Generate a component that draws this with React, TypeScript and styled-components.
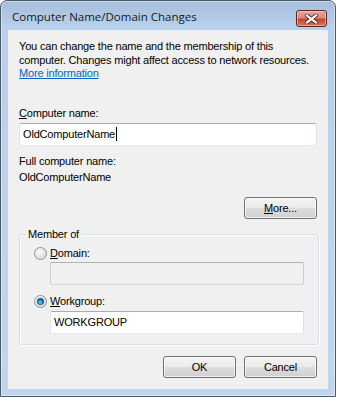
import React from 'react'
import styled, { createGlobalStyle } from 'styled-components'

const GlobalStyle = createGlobalStyle`
  html, body {
    margin: 0;
    padding: 0;
    background: #ffffff;
  }
  body {
    font-family: "Liberation Sans", Arial, sans-serif;
    font-size: 11px;
    letter-spacing: -0.18px;
    color: #000;
  }
`;

const Window = styled.div`
  width: 336px;
  height: 397px;
  box-sizing: border-box;
  border: 1px solid #4b5a6a;
  border-radius: 7px 7px 0 0;
  background: linear-gradient(#a5bedb 0px, #b9d0ea 26px, #bfd6ef 100%);
  padding: 0 7px 7px;
  display: flex;
  flex-direction: column;
  box-shadow: inset 0 0 0 1px rgba(255, 255, 255, 0.45);
`;

const TitleBar = styled.div`
  height: 29px;
  display: flex;
  align-items: flex-start;
  justify-content: space-between;
`;

const Title = styled.div`
  font-family: "Open Sans", "Noto Sans", sans-serif;
  font-size: 11.5px;
  letter-spacing: 0;
  line-height: 16px;
  padding: 8px 0 0 4px;
  color: #111a24;
`;

const CloseButton = styled.div`
  width: 31px;
  height: 17px;
  box-sizing: border-box;
  margin: 9px 1px 0 0;
  border: 1px solid #5e2323;
  border-radius: 3px;
  background: linear-gradient(#e6a697 0%, #d98a78 45%, #c5482f 55%, #d2715a 100%);
  box-shadow: inset 0 0 0 1px rgba(255, 220, 210, 0.55);
  display: flex;
  align-items: center;
  justify-content: center;
`;

const Client = styled.div`
  flex: 1;
  background: #f0f0f0;
  padding: 10px 11px 0;
  display: flex;
  flex-direction: column;
`;

const Text = styled.div<{ $top?: number }>`
  line-height: 13.5px;
  white-space: nowrap;
  margin-top: ${p => p.$top ?? 0}px;
`;

const Link = styled.a`
  color: #0066cc;
  text-decoration: underline;
  cursor: pointer;
`;

const TextBox = styled.div<{ $disabled?: boolean; $width?: number }>`
  box-sizing: border-box;
  height: 23px;
  width: ${p => (p.$width ? `${p.$width}px` : 'auto')};
  border: 1px solid;
  border-color: ${p => (p.$disabled ? '#adb2b5 #c9cdd1 #d3d6da #c9cdd1' : '#abadb3 #dbdfe6 #e3e9ef #e2e3ea')};
  border-radius: 2px;
  background: ${p => (p.$disabled ? '#f0f0f0' : '#ffffff')};
  padding: 0 3px;
  display: flex;
  align-items: center;
  line-height: 13px;
`;

const Caret = styled.span`
  display: inline-block;
  width: 1px;
  height: 14px;
  background: #000;
  margin-left: 1px;
`;

const ButtonRow = styled.div<{ $top: number }>`
  display: flex;
  justify-content: flex-end;
  gap: 8px;
  margin-top: ${p => p.$top}px;
`;

const Button = styled.button`
  width: 73px;
  height: 22px;
  box-sizing: border-box;
  border: 1px solid #707070;
  border-radius: 3px;
  background: linear-gradient(#f2f2f2 0%, #ebebeb 48%, #dddddd 52%, #cfcfcf 100%);
  box-shadow: inset 0 0 0 1px rgba(255, 255, 255, 0.7);
  font-family: "Liberation Sans", Arial, sans-serif;
  font-size: 11px;
  letter-spacing: -0.18px;
  color: #000;
  padding: 0;
`;

const Group = styled.fieldset`
  margin: 9px 0 0;
  padding: 0;
  border: 1px solid #d5dfe5;
  border-radius: 3px;
  box-shadow: inset 1px 1px 0 #ffffff, 1px 1px 0 #ffffff;
`;

const Legend = styled.legend`
  margin-left: 6px;
  padding: 0 2px;
  line-height: 13.5px;
`;

const GroupBody = styled.div`
  padding: 5.5px 14px 10px 14px;
`;

const RadioRow = styled.label<{ $top?: number }>`
  display: flex;
  align-items: center;
  gap: 3px;
  height: 13.5px;
  line-height: 13.5px;
  margin-top: ${p => p.$top ?? 0}px;
`;

const IndentedBox = styled.div<{ $top: number }>`
  margin: ${p => p.$top}px 0 0 16px;
`;

function Radio({ checked }: { checked?: boolean }) {
  return (
    <svg width="13" height="13" viewBox="0 0 13 13">
      <defs>
        <radialGradient id={checked ? 'rgOn' : 'rgOff'} cx="0.35" cy="0.3" r="0.8">
          <stop offset="0" stopColor="#ffffff" />
          <stop offset="1" stopColor="#cfd3d6" />
        </radialGradient>
        <radialGradient id="dot" cx="0.45" cy="0.65" r="0.7">
          <stop offset="0" stopColor="#7fd8ff" />
          <stop offset="0.55" stopColor="#1a78b8" />
          <stop offset="1" stopColor="#0a3a66" />
        </radialGradient>
      </defs>
      <circle cx="6.5" cy="6.5" r="6" fill={`url(#${checked ? 'rgOn' : 'rgOff'})`} stroke="#8e9093" />
      <circle cx="6.5" cy="6.5" r="4.6" fill="none" stroke="#e4e6e8" strokeWidth="1" />
      {checked && <circle cx="6.5" cy="6.5" r="3.3" fill="url(#dot)" stroke="#174d78" strokeWidth="0.6" />}
    </svg>
  )
}

function CloseGlyph() {
  return (
    <svg width="13" height="10" viewBox="0 0 13 10">
      <path d="M2 1.5 L11 8.5 M11 1.5 L2 8.5" stroke="#5a2a24" strokeWidth="4" strokeLinecap="square" />
      <path d="M2 1.5 L11 8.5 M11 1.5 L2 8.5" stroke="#ffffff" strokeWidth="2.2" strokeLinecap="square" />
    </svg>
  )
}

export default function App() {
  return (
    <>
      <GlobalStyle />
      <Window>
        <TitleBar>
          <Title>Computer Name/Domain Changes</Title>
          <CloseButton><CloseGlyph /></CloseButton>
        </TitleBar>
        <Client>
          <Text>
            You can change the name and the membership of this<br />
            computer. Changes might affect access to network resources.<br />
            <Link>More information</Link>
          </Text>

          <Text $top={26.5}><u>C</u>omputer name:</Text>
          <div style={{ marginTop: 2 }}>
            <TextBox>OldComputerName<Caret /></TextBox>
          </div>

          <Text $top={9.5}>Full computer name:</Text>
          <Text $top={2.5}>OldComputerName</Text>

          <ButtonRow $top={12.5}>
            <Button><u>M</u>ore...</Button>
          </ButtonRow>

          <Group>
            <Legend>Member of</Legend>
            <GroupBody>
              <RadioRow>
                <Radio />
                <span><u>D</u>omain:</span>
              </RadioRow>
              <IndentedBox $top={1}>
                <TextBox $disabled $width={254} />
              </IndentedBox>
              <RadioRow $top={10.5}>
                <Radio checked />
                <span><u>W</u>orkgroup:</span>
              </RadioRow>
              <IndentedBox $top={2}>
                <TextBox $width={254}>WORKGROUP</TextBox>
              </IndentedBox>
            </GroupBody>
          </Group>

          <ButtonRow $top={11.5}>
            <Button>OK</Button>
            <Button>Cancel</Button>
          </ButtonRow>
        </Client>
      </Window>
    </>
  )
}
